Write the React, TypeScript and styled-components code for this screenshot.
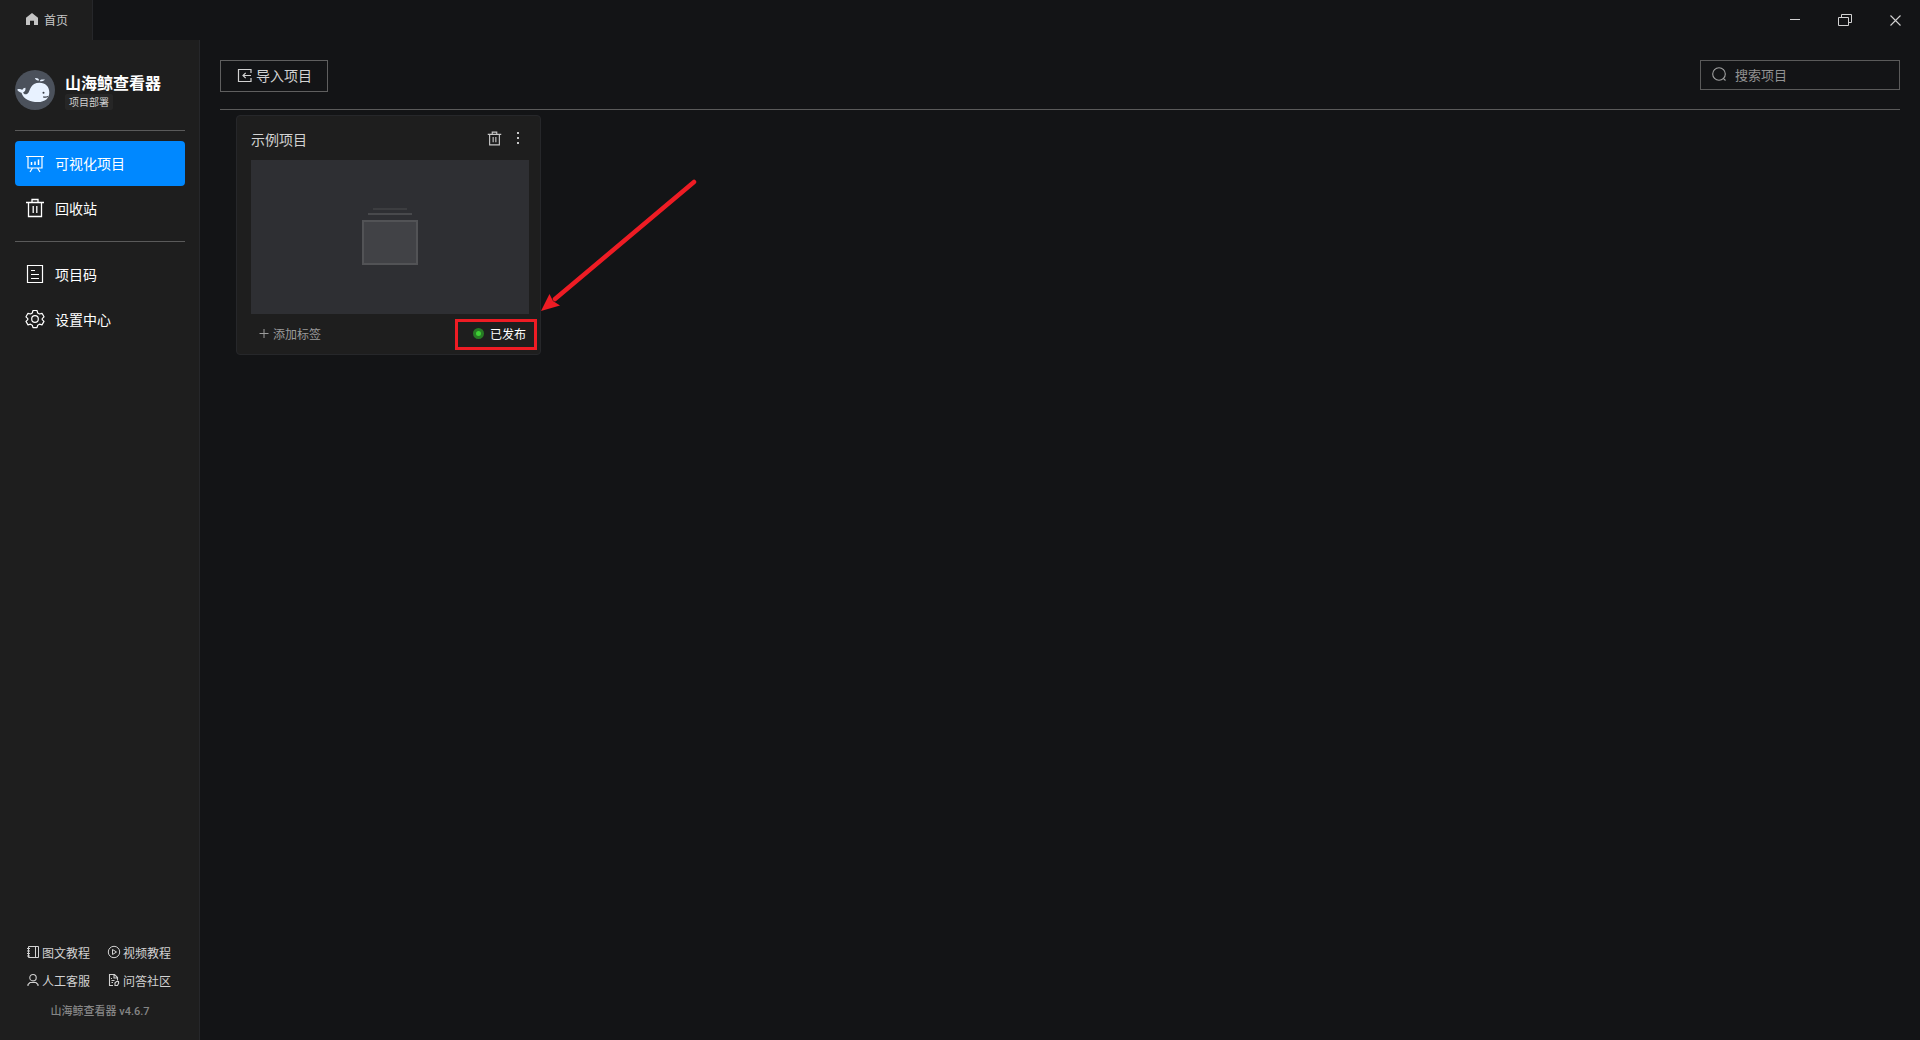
import React from 'react';
import styled, { createGlobalStyle } from 'styled-components';

const GlobalStyle = createGlobalStyle`
  *, *::before, *::after { box-sizing: border-box; }
  html, body, #root { height: 100%; }
  body {
    margin: 0;
    background: #131416;
    color: #d2d2d2;
    font-family: "Noto Sans CJK SC", sans-serif;
    font-size: 14px;
  }
  button, input { font: inherit; color: inherit; }
  svg { display: block; flex: none; }
`;

const Window = styled.div`
  display: flex;
  flex-direction: column;
  min-height: 100vh;
`;

const TitleBar = styled.header`
  display: flex;
  justify-content: space-between;
  height: 40px;
`;

const HomeTab = styled.button`
  display: flex;
  align-items: center;
  gap: 6px;
  padding: 0 24px 2px 26px;
  border: 0;
  border-right: 1px solid #26272a;
  background: #1e1e1e;
  color: #c8c8c8;
  font-size: 12px;
`;

const WindowControls = styled.div`
  display: flex;
`;

const WindowButton = styled.button`
  display: grid;
  place-items: center;
  width: 50px;
  padding: 0;
  border: 0;
  background: none;
  color: #d2d2d2;
`;

const Body = styled.div`
  display: flex;
  flex: 1;
`;

const Sidebar = styled.aside`
  display: flex;
  flex: none;
  flex-direction: column;
  width: 200px;
  padding: 30px 14px 18px 15px;
  border-right: 1px solid #26272a;
  background: #1e1e1e;
`;

const Brand = styled.div`
  display: flex;
  gap: 10px;
  height: 60px;
`;

const BrandText = styled.div`
  display: flex;
  flex-direction: column;
  align-items: flex-start;
  gap: 2px;
  padding-top: 2px;
`;

const BrandName = styled.h1`
  margin: 0;
  color: #fff;
  font-size: 16px;
  font-weight: 700;
  line-height: 20px;
`;

const BrandTag = styled.span`
  padding: 0 4px;
  border-radius: 2px;
  background: #262626;
  color: #d2d2d2;
  font-size: 10px;
  line-height: 16px;
`;

const NavGroup = styled.nav`
  padding: 10px 0;
  border-top: 1px solid #5a5a5a;
`;

const NavItem = styled.a<{ $active?: boolean }>`
  display: flex;
  align-items: center;
  gap: 10px;
  height: 45px;
  padding: 0 10px 2px;
  border-radius: 4px;
  background: ${({ $active }) => ($active ? '#0088ff' : 'transparent')};
  color: #fff;
  text-decoration: none;
`;

const HelpLinks = styled.div`
  display: grid;
  grid-template-columns: repeat(2, 72px);
  column-gap: 9px;
  margin-top: auto;
  padding-left: 11px;
`;

const HelpLink = styled.a`
  display: flex;
  align-items: center;
  gap: 2px;
  height: 28px;
  color: #d2d2d2;
  font-size: 12px;
  text-decoration: none;
  white-space: nowrap;
`;

const Version = styled.p`
  margin: 8px 0 0;
  color: #858585;
  font-family: Roboto, "Noto Sans CJK SC", sans-serif;
  font-size: 11px;
  font-weight: 500;
  line-height: 20px;
  text-align: center;
`;

const Main = styled.main`
  flex: 1;
  padding: 20px;
`;

const Toolbar = styled.div`
  display: flex;
  align-items: flex-start;
  justify-content: space-between;
  height: 50px;
  border-bottom: 1px solid #5a5a5a;
`;

const ImportButton = styled.button`
  display: flex;
  align-items: center;
  gap: 4px;
  height: 32px;
  padding: 0 15px 2px 16px;
  border: 1px solid #5f5f5f;
  background: none;
  color: #d2d2d2;
`;

const SearchBox = styled.label`
  display: flex;
  align-items: center;
  gap: 8px;
  width: 200px;
  height: 30px;
  padding: 0 10px 2px;
  border: 1px solid #5a5a5a;
  color: #a2a2a2;
`;

const SearchInput = styled.input`
  flex: 1;
  min-width: 0;
  padding: 0;
  border: 0;
  outline: 0;
  background: none;
  font-size: 13px;
  &::placeholder { color: #929292; opacity: 1; }
`;

const ProjectGrid = styled.div`
  display: flex;
  flex-wrap: wrap;
  gap: 16px;
  padding: 5px 16px;
`;

const Card = styled.article`
  position: relative;
  width: 305px;
  padding: 0 11px 0 14px;
  border: 1px solid #26272a;
  border-radius: 4px;
  background: #1e1e1e;
`;

const CardHeader = styled.div`
  display: flex;
  align-items: center;
  gap: 6px;
  height: 44px;
  padding-right: 2px;
`;

const CardTitle = styled.h2`
  flex: 1;
  margin: 0;
  padding-top: 2px;
  color: #d2d2d2;
  font-size: 14px;
  font-weight: 400;
  line-height: 20px;
`;

const IconButton = styled.button`
  display: grid;
  place-items: center;
  width: 18px;
  height: 20px;
  padding: 0;
  border: 0;
  background: none;
  color: #c8c8c8;
`;

const Thumbnail = styled.div`
  display: grid;
  place-items: center;
  height: 154px;
  background: #2e2f33;
`;

const CardFooter = styled.div`
  display: flex;
  align-items: center;
  justify-content: space-between;
  height: 40px;
  padding: 0 3px 2px 8px;
  font-size: 12px;
`;

const AddTagButton = styled.button`
  display: flex;
  align-items: center;
  gap: 4px;
  padding: 0;
  border: 0;
  background: none;
  color: #9b9b9b;
`;

const Status = styled.span`
  display: flex;
  align-items: center;
  gap: 6px;
  color: #fff;
`;

const StatusDot = styled.span`
  width: 11px;
  height: 11px;
  border: 3px solid #277a24;
  border-radius: 50%;
  background: #3fce35;
`;

const Highlight = styled.div`
  position: absolute;
  right: 3px;
  bottom: 4px;
  width: 82px;
  height: 31px;
  border: 3px solid #ee1c24;
  pointer-events: none;
`;

const Arrow = styled.svg`
  position: absolute;
  top: 60px;
  left: 304px;
  pointer-events: none;
`;

const Whale = () => (
  <svg width="40" height="40" viewBox="0 0 40 40" aria-hidden="true">
    <circle cx="20" cy="20" r="20" fill="#4b515b" />
    <path
      fill="#e8f2ff"
      d="M2.2 19.6c2.2-.9 4-.5 5 .5.4-1.3 1.5-2.3 3.2-2.4.6 2.3-.7 4.1-2.3 4.8.6 1.5 2.3 2.6 4.3 1.2 1.6-1.1 2-3.4 3-5.5 1.8-3.7 5-5.5 9.1-5.5 6 0 9.8 4 9.8 9.5 0 6-4.2 9.8-11.3 9.8-8.2 0-14.600-2.800-16.500-9.300-2-.3-3.700-1.300-4.300-3.100z"
    />
    <path
      fill="#e8f2ff"
      d="M25 11.200c0-1.200.6-1.900 1.700-1.800 1.100.1 1.900-.1 3-.2-.3 1.500-2.200 2.100-4.700 2zM24.200 10.600c-1.500.1-3.900-.4-4.200-2.600 2-.2 4 .4 4.200 2.600z"
    />
    <circle cx="28.500" cy="22.800" r="1" fill="#343a44" />
    <path d="M28.200 26.700c1.500.9 3.200.5 4.800-.2" fill="none" stroke="#343a44" strokeWidth="1.200" />
  </svg>
);

const strokes = { fill: 'none', stroke: 'currentColor', strokeWidth: 1.2, 'aria-hidden': true } as const;

const HomeIcon = () => (
  <svg width="12" height="12" viewBox="0 0 12 12" fill="#c4c4c4" aria-hidden="true">
    <path d="M6 0 12 4.800V12H8V7.700H4V12H0V4.800z" />
  </svg>
);

const BoardIcon = () => (
  <svg width="20" height="20" viewBox="0 0 20 20" {...strokes}>
    <path d="M1 3.500h18M3 3.500v11.500h14V3.500M7.500 15 5 19M12.500 15l2.500 4" />
    <path d="M6.500 9v3M10 8.500V12M13.500 6.500V12" strokeWidth="1.500" />
  </svg>
);

const TrashIcon = ({ size }: { size: number }) => (
  <svg width={size} height={size} viewBox="0 0 20 20" {...strokes} strokeWidth={size > 16 ? 1.3 : 1.5}>
    <path d="M1 4.500h18M3.500 4.500v14h13v-14M7 4.500v-3h6v3M8.200 8v7M11.800 8v7" />
  </svg>
);

const CodeIcon = () => (
  <svg width="20" height="20" viewBox="0 0 20 20" {...strokes}>
    <path d="M2.500 1.500h15v17h-15zM6 6.500h4M6 10.500h8M6 14.500h8" />
  </svg>
);

const GearIcon = () => (
  <svg width="20" height="20" viewBox="0 0 20 20" {...strokes} strokeLinejoin="round">
    <circle cx="10" cy="10" r="3.300" />
    <path d="M8 1.500h4l.7 2.500 1.800 1 2.500-.7 2 3.500-1.800 1.800v1l1.800 1.800-2 3.500-2.500-.7-1.800 1-.7 2.500H8L7.300 16.200l-1.800-1-2.500.7-2-3.500 1.800-1.800v-1L1 7.800l2-3.500 2.500.7 1.800-1z" />
  </svg>
);

const BookIcon = () => (
  <svg width="14" height="14" viewBox="0 0 14 14" {...strokes} strokeWidth="1">
    <path d="M2.500 1.500h10v11h-10zM9.500 1.500v11M1 3.500h3M1 6h3M1 8.500h3M1 11h3" />
  </svg>
);

const PlayIcon = () => (
  <svg width="14" height="14" viewBox="0 0 14 14" {...strokes} strokeWidth="1">
    <circle cx="7" cy="7" r="5.700" />
    <path d="M5.500 4.500v5L9.500 7z" />
  </svg>
);

const PersonIcon = () => (
  <svg width="14" height="14" viewBox="0 0 14 14" {...strokes} strokeWidth="1.100">
    <circle cx="7" cy="4.700" r="3.200" />
    <path d="M2 13v-1.500l2-2h6l2 2V13" />
  </svg>
);

const ForumIcon = () => (
  <svg width="14" height="14" viewBox="0 0 14 14" {...strokes} strokeWidth="1.100">
    <path d="M6 12.500H2.500v-11h5l3 3v3M7 1.500V5h3.500M4.500 5v1M4.500 7.500h3M4.500 9.500H6M7.500 10.500l2-2h2v2M12 9.500l-1.500 3H8v-2" />
  </svg>
);

const ImportIcon = () => (
  <svg width="15" height="15" viewBox="0 0 15 15" {...strokes}>
    <path d="M14 5V1.500H1.500v12H14V10M14 7.500H6M8.700 4.800 6 7.500l2.700 2.700" />
  </svg>
);

const SearchIcon = () => (
  <svg width="16" height="16" viewBox="0 0 16 16" {...strokes} strokeWidth="1.100">
    <circle cx="8" cy="8" r="6.300" />
    <path d="m12.300 12.300 2.200 2.200" />
  </svg>
);

const DotsIcon = () => (
  <svg width="4" height="14" viewBox="0 0 4 14" fill="currentColor" aria-hidden="true">
    <path d="M1 1h2v2H1zM1 6h2v2H1zM1 11h2v2H1z" />
  </svg>
);

const PlusIcon = () => (
  <svg width="10" height="10" viewBox="0 0 10 10" {...strokes} strokeWidth="1">
    <path d="M.5 5.500h9M5 1v9" />
  </svg>
);

const MinimizeIcon = () => (
  <svg width="10" height="2" viewBox="0 0 10 2" fill="currentColor" aria-hidden="true">
    <path d="M0 0h10v1H0z" />
  </svg>
);

const RestoreIcon = () => (
  <svg width="14" height="12" viewBox="0 0 14 12" {...strokes} strokeWidth="1">
    <path d="M.5 3.500h10v8H.5zM3.500 3.500v-3h10v8h-3" />
  </svg>
);

const CloseIcon = () => (
  <svg width="11" height="11" viewBox="0 0 11 11" {...strokes} strokeWidth="1.100">
    <path d="m.5.500 10 10M10.500.500l-10 10" />
  </svg>
);

const EmptyPreview = () => (
  <svg width="56" height="60" viewBox="0 0 56 60" aria-hidden="true">
    <path d="M11 2h34" stroke="#3c3d40" strokeWidth="2" />
    <path d="M6 7h44" stroke="#48494c" strokeWidth="2" />
    <path d="M1 14h54v43H1z" fill="#414246" stroke="#525356" strokeWidth="2" />
  </svg>
);

export default function App() {
  return (
    <>
      <GlobalStyle />
      <Window>
        <TitleBar>
          <HomeTab type="button"><HomeIcon />首页</HomeTab>
          <WindowControls>
            <WindowButton type="button" aria-label="最小化"><MinimizeIcon /></WindowButton>
            <WindowButton type="button" aria-label="还原"><RestoreIcon /></WindowButton>
            <WindowButton type="button" aria-label="关闭"><CloseIcon /></WindowButton>
          </WindowControls>
        </TitleBar>
        <Body>
          <Sidebar>
            <Brand>
              <Whale />
              <BrandText>
                <BrandName>山海鲸查看器</BrandName>
                <BrandTag>项目部署</BrandTag>
              </BrandText>
            </Brand>
            <NavGroup>
              <NavItem href="#projects" $active><BoardIcon />可视化项目</NavItem>
              <NavItem href="#trash"><TrashIcon size={20} />回收站</NavItem>
            </NavGroup>
            <NavGroup>
              <NavItem href="#code"><CodeIcon />项目码</NavItem>
              <NavItem href="#settings"><GearIcon />设置中心</NavItem>
            </NavGroup>
            <HelpLinks>
              <HelpLink href="#docs"><BookIcon />图文教程</HelpLink>
              <HelpLink href="#videos"><PlayIcon />视频教程</HelpLink>
              <HelpLink href="#support"><PersonIcon />人工客服</HelpLink>
              <HelpLink href="#community"><ForumIcon />问答社区</HelpLink>
            </HelpLinks>
            <Version>山海鲸查看器 v4.6.7</Version>
          </Sidebar>
          <Main>
            <Toolbar>
              <ImportButton type="button"><ImportIcon />导入项目</ImportButton>
              <SearchBox>
                <SearchIcon />
                <SearchInput type="text" placeholder="搜索项目" aria-label="搜索项目" />
              </SearchBox>
            </Toolbar>
            <ProjectGrid>
              <Card>
                <CardHeader>
                  <CardTitle>示例项目</CardTitle>
                  <IconButton type="button" aria-label="删除"><TrashIcon size={15} /></IconButton>
                  <IconButton type="button" aria-label="更多"><DotsIcon /></IconButton>
                </CardHeader>
                <Thumbnail><EmptyPreview /></Thumbnail>
                <CardFooter>
                  <AddTagButton type="button"><PlusIcon />添加标签</AddTagButton>
                  <Status><StatusDot />已发布</Status>
                </CardFooter>
                <Highlight />
                <Arrow width="156" height="140" viewBox="0 0 156 140" fill="#ee1c24" aria-hidden="true">
                  <path d="M153 6 14 123" stroke="#ee1c24" strokeWidth="4.500" strokeLinecap="round" />
                  <path d="M0 135 8.500 118l3.500 7 7 4.500z" />
                </Arrow>
              </Card>
            </ProjectGrid>
          </Main>
        </Body>
      </Window>
    </>
  );
}
